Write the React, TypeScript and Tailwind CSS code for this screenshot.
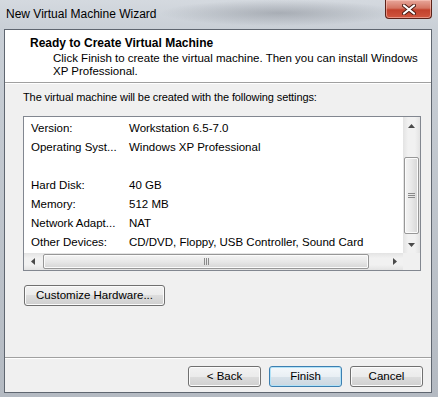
import React from 'react';

const font = "font-['Liberation_Sans','Segoe_UI',Arial,sans-serif]";

// 普通按钮 (Win7 风格)
const WinButton = ({ label, width, primary = false }: { label: string; width: string; primary?: boolean }) => (
  <div
    className={`${width} h-[21px] flex items-center justify-center rounded-[3px] border text-[11.5px] text-black ${
      primary
        ? 'border-[#3c7fb1] bg-[linear-gradient(180deg,#f4f8fb_0%,#e9eff4_50%,#d8e2ea_50%,#cbd7e0_100%)] shadow-[inset_0_0_0_1px_#b2e2f7]'
        : 'border-[#707070] bg-[linear-gradient(180deg,#f2f2f2_0%,#ebebeb_50%,#dddddd_50%,#cfcfcf_100%)] shadow-[inset_0_0_0_1px_#fbfbfb]'
    }`}
  >
    {label}
  </div>
);

// 滚动条箭头
const Arrow = ({ dir }: { dir: 'up' | 'down' | 'left' | 'right' }) => {
  const pts = {
    up: '0,4 3.5,0 7,4',
    down: '0,0 7,0 3.5,4',
    left: '4,0 4,7 0,3.5',
    right: '0,0 4,3.5 0,7',
  }[dir];
  const horiz = dir === 'up' || dir === 'down';
  return (
    <svg width={horiz ? 7 : 4} height={horiz ? 4 : 7} viewBox={horiz ? '0 0 7 4' : '0 0 4 7'}>
      <polygon points={pts} fill="#4a4a4a" />
    </svg>
  );
};

const rows: [string, string][] = [
  ['Version:', 'Workstation 6.5-7.0'],
  ['Operating Syst...', 'Windows XP Professional'],
  ['', ''],
  ['Hard Disk:', '40 GB'],
  ['Memory:', '512 MB'],
  ['Network Adapt...', 'NAT'],
  ['Other Devices:', 'CD/DVD, Floppy, USB Controller, Sound Card'],
];

export default function App() {
  return (
    <div
      className={`${font} w-[438px] h-[397px] overflow-hidden flex flex-col bg-[radial-gradient(ellipse_120px_13px_at_280px_13px,rgba(95,100,110,0.35),transparent),linear-gradient(180deg,#d4d9df_0%,#c9cfd6_30px,#b4bac2_100%)]`}
    >
      {/* 标题栏 */}
      <div className="h-[29px] flex items-start justify-between shrink-0">
        <span className="pl-[6px] pt-[6px] text-[12px] leading-[16px] text-black">New Virtual Machine Wizard</span>
        <div className="mr-[6px] w-[47px] h-[19px] rounded-b-[4px] border border-t-0 border-[#5b2219] bg-[linear-gradient(180deg,#e8a79b_0%,#d47563_45%,#c2412c_55%,#d0563f_100%)] shadow-[inset_0_0_0_1px_rgba(255,210,200,0.5)] flex items-center justify-center">
          <svg width="14" height="11" viewBox="0 0 14 11">
            <path d="M2 1.5 L12 9.5 M12 1.5 L2 9.5" stroke="#4a1a12" strokeWidth="4" strokeLinecap="round" />
            <path d="M2 1.5 L12 9.5 M12 1.5 L2 9.5" stroke="#ffffff" strokeWidth="2.2" strokeLinecap="round" />
          </svg>
        </div>
      </div>

      {/* 客户区 */}
      <div className="ml-[4px] w-[428px] h-[364px] border border-[#5f6670] flex flex-col bg-[#f0f0f0] text-[11.5px] text-black">
        {/* 白色头部 */}
        <div className="h-[52px] bg-white pl-[25px] pt-[5px]">
          <div className="font-bold text-[12px] leading-[16px]">Ready to Create Virtual Machine</div>
          <div className="pl-[23px] mt-[1px] leading-[13px]">
            Click Finish to create the virtual machine. Then you can install Windows
            <br />
            XP Professional.
          </div>
        </div>
        <div className="h-px bg-[#a0a0a0]" />
        <div className="h-px bg-white" />

        {/* 主体 */}
        <div className="h-[273px] pl-[18px] pt-[6px]">
          <div className="leading-[14px] text-[11px] tracking-[-0.1px]">
            The virtual machine will be created with the following settings:
          </div>

          {/* 列表框 */}
          <div className="mt-[12px] w-[398px] h-[155px] border border-[#828790] bg-white flex flex-col">
            <div className="flex h-[136px]">
              <div className="flex-1 overflow-hidden pt-[2px] pl-[7px]">
                {rows.map(([k, v], i) => (
                  <div key={i} className="flex h-[19px] items-center whitespace-nowrap">
                    <span className="w-[98px] shrink-0">{k}</span>
                    <span>{v}</span>
                  </div>
                ))}
              </div>
              {/* 垂直滚动条 */}
              <div className="w-[17px] flex flex-col bg-[linear-gradient(90deg,#e3e3e3,#f1f1f1_30%,#f1f1f1_70%,#e3e3e3)]">
                <div className="h-[17px] flex items-center justify-center">
                  <Arrow dir="up" />
                </div>
                <div className="h-[23px]" />
                <div className="h-[77px] mx-px rounded-[2px] border border-[#979797] bg-[linear-gradient(90deg,#f4f4f4,#e8e8e8_50%,#d6d6d6)] shadow-[inset_0_0_0_1px_#fbfbfb] flex flex-col items-center justify-center gap-[1px]">
                  <div className="w-[7px] h-px bg-[#8a8a8a]" />
                  <div className="w-[7px] h-px bg-[#8a8a8a]" />
                  <div className="w-[7px] h-px bg-[#8a8a8a]" />
                </div>
                <div className="h-[2px]" />
                <div className="h-[17px] flex items-center justify-center">
                  <Arrow dir="down" />
                </div>
              </div>
            </div>
            {/* 水平滚动条 */}
            <div className="flex h-[17px]">
              <div className="flex-1 flex bg-[linear-gradient(180deg,#e3e3e3,#f1f1f1_30%,#f1f1f1_70%,#e3e3e3)]">
                <div className="w-[17px] flex items-center justify-center">
                  <Arrow dir="left" />
                </div>
                <div className="w-[2px]" />
                <div className="w-[326px] my-px rounded-[2px] border border-[#979797] bg-[linear-gradient(180deg,#f4f4f4,#e8e8e8_50%,#d6d6d6)] shadow-[inset_0_0_0_1px_#fbfbfb] flex items-center justify-center gap-[1px]">
                  <div className="w-px h-[7px] bg-[#8a8a8a]" />
                  <div className="w-px h-[7px] bg-[#8a8a8a]" />
                  <div className="w-px h-[7px] bg-[#8a8a8a]" />
                </div>
                <div className="flex-1" />
                <div className="w-[17px] flex items-center justify-center">
                  <Arrow dir="right" />
                </div>
              </div>
              <div className="w-[17px] bg-[#f0f0f0]" />
            </div>
          </div>

          <div className="mt-[14px] ml-px">
            <WinButton label="Customize Hardware..." width="w-[141px]" />
          </div>
        </div>

        <div className="h-px bg-[#a0a0a0]" />
        <div className="h-px bg-white" />

        {/* 底部按钮 */}
        <div className="flex-1 flex justify-end gap-[8px] pr-[8px] pt-[7px]">
          <WinButton label="< Back" width="w-[73px]" />
          <WinButton label="Finish" width="w-[73px]" primary />
          <WinButton label="Cancel" width="w-[73px]" />
        </div>
      </div>
    </div>
  );
}
